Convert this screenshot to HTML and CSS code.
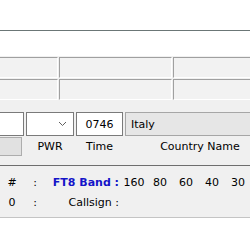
FILE: index.html
```html
<!DOCTYPE html>
<html lang="en">
<head>
  <meta charset="UTF-8" />
  <title>FT8 Log</title>
  <link rel="stylesheet" href="styles.css">
</head>
<body>

  <!-- Title strip -->
  <div class="titlebar"></div>
  <div class="blank"></div>

  <!-- Entry panel -->
  <div class="panel">
    <div class="status-row">
      <div class="cell cell-a"></div>
      <div class="cell cell-b"></div>
      <div class="cell cell-c"></div>
    </div>
    <div class="status-row">
      <div class="cell cell-a"></div>
      <div class="cell cell-b"></div>
      <div class="cell cell-c"></div>
    </div>

    <div class="entry-row">
      <div class="box box-call"></div>
      <div class="box box-pwr">
        <svg width="9" height="6" viewBox="0 0 9 6"><polyline points="1,1 4.5,4.5 8,1" fill="none" stroke="#606060" stroke-width="1"/></svg>
      </div>
      <div class="box box-time">0746</div>
      <div class="box box-country">Italy</div>
    </div>

    <div class="label-row">
      <div class="btn"></div>
      <div class="label label-pwr">PWR</div>
      <div class="label label-time">Time</div>
      <div class="label label-country">Country Name</div>
    </div>
  </div>

  <!-- Band table -->
  <div class="log">
    <div class="log-grid">
      <span class="c">#</span>
      <span class="c">:</span>
      <span class="r band">FT8 Band :</span>
      <span class="c">160</span>
      <span class="c">80</span>
      <span class="c">60</span>
      <span class="c">40</span>
      <span class="c">30</span>

      <span class="c">0</span>
      <span class="c">:</span>
      <span class="r">Callsign :</span>
      <span></span><span></span><span></span><span></span><span></span>
    </div>
  </div>

</body>
</html>
```

FILE: styles.css
```css
* {
  box-sizing: border-box;
}

body {
  margin: 0;
  background: #fff;
  font-family: "DejaVu Sans", Verdana, sans-serif;
  font-size: 11px;
  color: #000;
  width: 250px;
  overflow: hidden;
}

.titlebar {
  height: 31px;
  border-bottom: 1px solid #6b7676;
}

.blank {
  height: 25px;
}

.panel {
  background: #f0f0f0;
  padding: 1px 0 9px;
  border-bottom: 1px solid #6e6e6e;
  overflow: hidden;
}

.status-row {
  display: flex;
  gap: 1px;
  margin-bottom: 1px;
  overflow: hidden;
}

.cell {
  height: 21px;
  flex: none;
  background: #f2f2f2;
  border-top: 1px solid #a0a0a0;
  border-left: 1px solid #a0a0a0;
  border-right: 1px solid #fff;
  border-bottom: 1px solid #fff;
}

.cell-a {
  width: 99px;
  margin-left: -41px;
}

.cell-b {
  width: 113px;
}

.cell-c {
  width: 200px;
}

.entry-row {
  display: flex;
  gap: 2px;
  margin-top: 12px;
  overflow: hidden;
}

.box {
  flex: none;
  height: 24px;
  background: #fff;
  border: 1px solid #7a7a7a;
  display: flex;
  align-items: center;
}

.box-call {
  width: 44px;
  margin-left: -20px;
}

.box-pwr {
  width: 48px;
  justify-content: flex-end;
  padding-right: 6px;
}

.box-time {
  width: 47px;
  justify-content: center;
}

.box-country {
  width: 150px;
  background: #e6e6e6;
  border-color: #a6a6a6;
  padding-left: 5px;
}

.label-row {
  display: flex;
  margin-top: 1px;
  height: 19px;
  align-items: center;
  overflow: hidden;
}

.btn {
  flex: none;
  width: 42px;
  height: 19px;
  margin-left: -20px;
  background: #e1e1e1;
  border: 1px solid #adadad;
}

.label {
  flex: none;
  text-align: center;
}

.label-pwr {
  width: 48px;
  margin-left: 4px;
}

.label-time {
  width: 47px;
  margin-left: 2px;
}

.label-country {
  width: 150px;
  margin-left: 2px;
}

.log {
  background: #f0f0f0;
  padding: 6px 0 5px;
  border-bottom: 1px solid #c4c4c4;
  overflow: hidden;
}

.log-grid {
  display: grid;
  grid-template-columns: 24px 22px 75px repeat(5, 26px);
  grid-auto-rows: 20px;
  align-items: center;
}

.c {
  text-align: center;
}

.r {
  text-align: right;
  padding-right: 2px;
}

.band {
  color: #1414c8;
  font-weight: bold;
}
```
